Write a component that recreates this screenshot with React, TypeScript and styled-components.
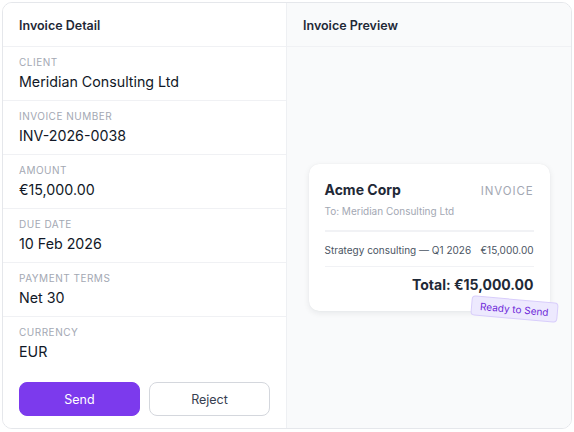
import { FC } from 'react'
import styled, { createGlobalStyle } from 'styled-components'

const GlobalStyle = createGlobalStyle`
  html, body {
    margin: 0;
    padding: 0;
    background: #ffffff;
  }
  body {
    font-family: Inter, "Noto Sans", "Liberation Sans", sans-serif;
    -webkit-font-smoothing: antialiased;
  }
`

const fields = [
  { label: 'Client', value: 'Meridian Consulting Ltd' },
  { label: 'Invoice Number', value: 'INV-2026-0038' },
  { label: 'Amount', value: '€15,000.00' },
  { label: 'Due Date', value: '10 Feb 2026' },
  { label: 'Payment Terms', value: 'Net 30' },
  { label: 'Currency', value: 'EUR' },
]

const Frame = styled.div`
  margin: 2px;
  width: 570px;
  height: 427px;
  box-sizing: border-box;
  border: 1px solid #e5e7eb;
  border-radius: 10px;
  overflow: hidden;
  display: grid;
  grid-template-columns: 283px 1fr;
  background: #ffffff;
`

const Panel = styled.section<{ tinted?: boolean }>`
  display: flex;
  flex-direction: column;
  min-height: 0;
  background: ${(p) => (p.tinted ? '#f9fafb' : '#ffffff')};
  border-left: ${(p) => (p.tinted ? '1px solid #eef0f3' : 'none')};
`

const PanelHeader = styled.header`
  flex-shrink: 0;
  display: flex;
  align-items: center;
  padding: 1px 16px 0;
  box-sizing: border-box;
  height: 44px;
  border-bottom: 1px solid #f0f1f4;
  font-size: 12.5px;
  font-weight: 600;
  color: #1f2937;
`

const Field = styled.div<{ last?: boolean }>`
  padding: 8px 16px;
  height: 54px;
  box-sizing: border-box;
  display: flex;
  flex-direction: column;
  gap: 2px;
  border-bottom: ${(p) => (p.last ? 'none' : '1px solid #f0f1f4')};
`

const FieldLabel = styled.span`
  font-size: 10px;
  line-height: 14px;
  letter-spacing: 0.5px;
  text-transform: uppercase;
  color: #a3a8b3;
`

const FieldValue = styled.span`
  font-size: 14.25px;
  line-height: 22px;
  color: #111827;
`

const Actions = styled.div`
  display: flex;
  gap: 9px;
  padding: 11px 16px 0;
`

const Button = styled.button<{ primary?: boolean }>`
  flex: 1;
  height: 34px;
  border-radius: 8px;
  font-family: inherit;
  font-size: 12.5px;
  cursor: pointer;
  border: 1px solid ${(p) => (p.primary ? '#7c3aed' : '#d4d7dd')};
  background: ${(p) => (p.primary ? '#7c3aed' : '#ffffff')};
  color: ${(p) => (p.primary ? '#ffffff' : '#374151')};
`

const Stage = styled.div`
  flex: 1;
  display: flex;
  align-items: center;
  justify-content: center;
`

const Card = styled.div`
  position: relative;
  width: 241px;
  box-sizing: border-box;
  padding: 16px;
  background: #ffffff;
  border-radius: 10px;
  box-shadow: 0 2px 6px rgba(17, 24, 39, 0.08), 0 0 1px rgba(17, 24, 39, 0.08);
`

const CardTop = styled.div`
  display: flex;
  justify-content: space-between;
  align-items: baseline;
`

const Company = styled.span`
  font-size: 14px;
  line-height: 20px;
  font-weight: 700;
  color: #1f2937;
`

const DocType = styled.span`
  font-size: 11.5px;
  letter-spacing: 0.9px;
  color: #a3a8b3;
`

const Recipient = styled.div`
  margin-top: 4px;
  padding-bottom: 12px;
  border-bottom: 2px solid #f1f2f5;
  font-size: 10px;
  line-height: 14px;
  color: #a3a8b3;
`

const LineItem = styled.div`
  display: flex;
  justify-content: space-between;
  padding: 11px 0 9px;
  border-bottom: 1px solid #f1f2f5;
  font-size: 10px;
  line-height: 14px;
  color: #4b5563;
`

const Total = styled.div`
  margin-top: 8px;
  text-align: right;
  font-size: 14px;
  line-height: 20px;
  font-weight: 700;
  color: #1f2937;
`

const Badge = styled.span`
  position: absolute;
  right: -8px;
  bottom: -8px;
  padding: 2px 8px;
  font-size: 10px;
  line-height: 14px;
  color: #6d28d9;
  background: #ede9fe;
  border: 1px solid #d8cdfb;
  border-radius: 4px;
  transform: rotate(5deg);
`

const App: FC = () => (
  <>
    <GlobalStyle />
    <Frame>
      <Panel>
        <PanelHeader>Invoice Detail</PanelHeader>
        {fields.map(({ label, value }, i) => (
          <Field key={label} last={i === fields.length - 1}>
            <FieldLabel>{label}</FieldLabel>
            <FieldValue>{value}</FieldValue>
          </Field>
        ))}
        <Actions>
          <Button primary>Send</Button>
          <Button>Reject</Button>
        </Actions>
      </Panel>
      <Panel tinted>
        <PanelHeader>Invoice Preview</PanelHeader>
        <Stage>
          <Card>
            <CardTop>
              <Company>Acme Corp</Company>
              <DocType>INVOICE</DocType>
            </CardTop>
            <Recipient>To: Meridian Consulting Ltd</Recipient>
            <LineItem>
              <span>Strategy consulting — Q1 2026</span>
              <span>€15,000.00</span>
            </LineItem>
            <Total>Total: €15,000.00</Total>
            <Badge>Ready to Send</Badge>
          </Card>
        </Stage>
      </Panel>
    </Frame>
  </>
)

export default App
